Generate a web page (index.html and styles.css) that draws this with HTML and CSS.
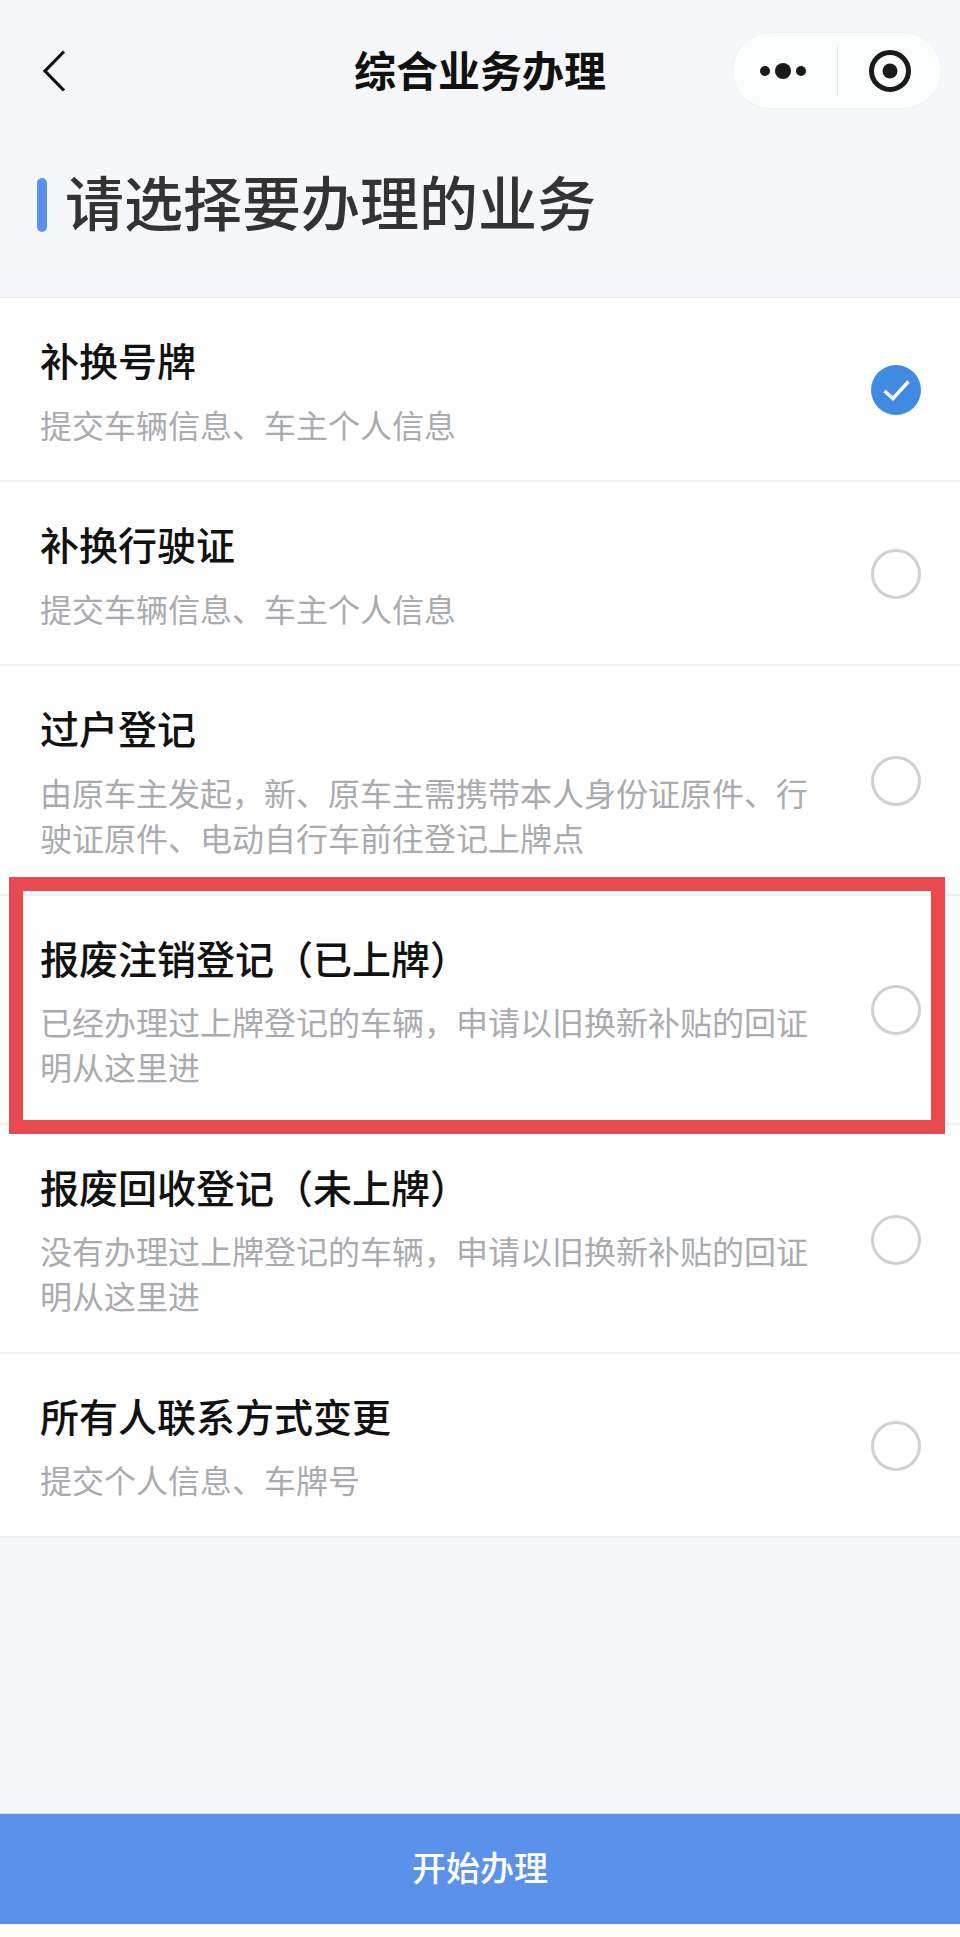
FILE: index.html
```html
<!DOCTYPE html>
<html lang="zh-CN">
<head>
<meta charset="utf-8">
<title>综合业务办理</title>
<link rel="stylesheet" href="styles.css">
</head>
<body>
<div class="page">
  <header class="nav">
    <button class="back" aria-label="返回">
      <svg width="24" height="42" viewBox="0 0 24 42"><path d="M22 1.5 L3 21 L22 40.5" fill="none" stroke="#111" stroke-width="3.2"/></svg>
    </button>
    <h1 class="nav-title">综合业务办理</h1>
    <div class="capsule">
      <svg class="cap-more" width="54" height="20" viewBox="0 0 54 20"><circle cx="6" cy="10" r="5" fill="#1a1a1a"/><circle cx="24" cy="10" r="8" fill="#1a1a1a"/><circle cx="42" cy="10" r="5" fill="#1a1a1a"/></svg>
      <span class="cap-line"></span>
      <svg class="cap-record" width="44" height="44" viewBox="0 0 44 44"><circle cx="22" cy="22" r="18.5" fill="none" stroke="#1a1a1a" stroke-width="5"/><circle cx="22" cy="22" r="7.5" fill="#1a1a1a"/></svg>
    </div>
  </header>

  <h2 class="heading"><span class="heading-bar"></span>请选择要办理的业务</h2>

  <ul class="list">
    <li class="row">
      <div class="row-text"><div class="row-title">补换号牌</div><p class="row-sub">提交车辆信息、车主个人信息</p></div>
      <svg class="radio" width="50" height="50" viewBox="0 0 50 50"><circle cx="25" cy="25" r="25" fill="#418ae2"/><path d="M13.5 26 L22 33.5 L37.5 16.5" fill="none" stroke="#fff" stroke-width="3.4"/></svg>
    </li>
    <li class="row">
      <div class="row-text"><div class="row-title">补换行驶证</div><p class="row-sub">提交车辆信息、车主个人信息</p></div>
      <span class="radio radio-off"></span>
    </li>
    <li class="row">
      <div class="row-text"><div class="row-title">过户登记</div><p class="row-sub">由原车主发起&#xFF0C;新、原车主需携带本人身份证原件、行驶证原件、电动自行车前往登记上牌点</p></div>
      <span class="radio radio-off"></span>
    </li>
    <li class="row row-marked">
      <div class="row-text"><div class="row-title">报废注销登记&#xFF08;已上牌&#xFF09;</div><p class="row-sub">已经办理过上牌登记的车辆&#xFF0C;申请以旧换新补贴的回证明从这里进</p></div>
      <span class="radio radio-off"></span>
      <span class="marker"></span>
    </li>
    <li class="row">
      <div class="row-text"><div class="row-title">报废回收登记&#xFF08;未上牌&#xFF09;</div><p class="row-sub">没有办理过上牌登记的车辆&#xFF0C;申请以旧换新补贴的回证明从这里进</p></div>
      <span class="radio radio-off"></span>
    </li>
    <li class="row">
      <div class="row-text"><div class="row-title">所有人联系方式变更</div><p class="row-sub">提交个人信息、车牌号</p></div>
      <span class="radio radio-off"></span>
    </li>
  </ul>

  <footer class="footer">
    <button class="start">开始办理</button>
  </footer>
</div>
</body>
</html>
```

FILE: styles.css
```css
* { box-sizing: border-box; }
html, body { margin: 0; padding: 0; }
body { background: #f5f7fb; font-family: "Noto Sans CJK SC", "Liberation Sans", sans-serif; }
.page { width: 960px; height: 1937px; display: flex; flex-direction: column; overflow: hidden; }

.nav { display: grid; grid-template-columns: 1fr auto 1fr; align-items: center; padding: 32px 18px 0 18px; height: 109px; }
.back { justify-self: start; margin-left: 24px; padding: 0; border: 0; background: none; display: flex; }
.nav-title { margin: 0 0 4px; font-size: 42px; line-height: 50px; font-weight: 700; color: #111; }
.capsule { justify-self: end; width: 210px; height: 77px; border-radius: 39px; background: #fbfcfc; border: 1px solid #f0f1f4; display: flex; align-items: center; padding-left: 7px; }
.cap-more { margin-left: 19px; }
.cap-line { width: 1px; height: 50px; background: #e6e7ea; margin-left: 24px; }
.cap-record { margin-left: 30px; }

.heading { margin: 61px 0 0; padding-left: 37px; display: flex; align-items: center; gap: 18px; height: 62px; font-size: 59px; line-height: 62px; font-weight: 500; color: #333; }
.heading-bar { width: 10px; height: 54px; border-radius: 5px; background: #5a91ea; margin-top: 8px; }

.list { list-style: none; margin: 65px 0 0; padding: 0; background: #fff; border-top: 1px solid #ececee; }
.row { position: relative; display: flex; align-items: center; justify-content: space-between; padding: 36px 39px 33.7px 40px; border-bottom: 2px solid #f0f0f1; }
.row-text { width: 780px; }
.row-title { font-size: 39px; line-height: 50px; font-weight: 500; color: #111; }
.row-sub { margin: 17.5px 0 0; font-size: 32px; line-height: 45px; color: #a9abaf; }
.radio { flex: none; display: block; width: 50px; height: 50px; }
.radio-off { border-radius: 50%; border: 3px solid #cfd0d2; }

.marker { position: absolute; left: 9px; right: 15px; top: -19px; bottom: -11px; border: 14.5px solid #e84a50; pointer-events: none; }

.footer { margin-top: auto; background: #fff; padding-bottom: 13px; }
.start { display: block; width: 100%; height: 111px; padding: 0 0 4px; border: 0; border-top: 1px solid #cfdcf3; background: #5a91ea; color: #fff; font-family: inherit; font-size: 34px; font-weight: 500; line-height: 50px; }
```
